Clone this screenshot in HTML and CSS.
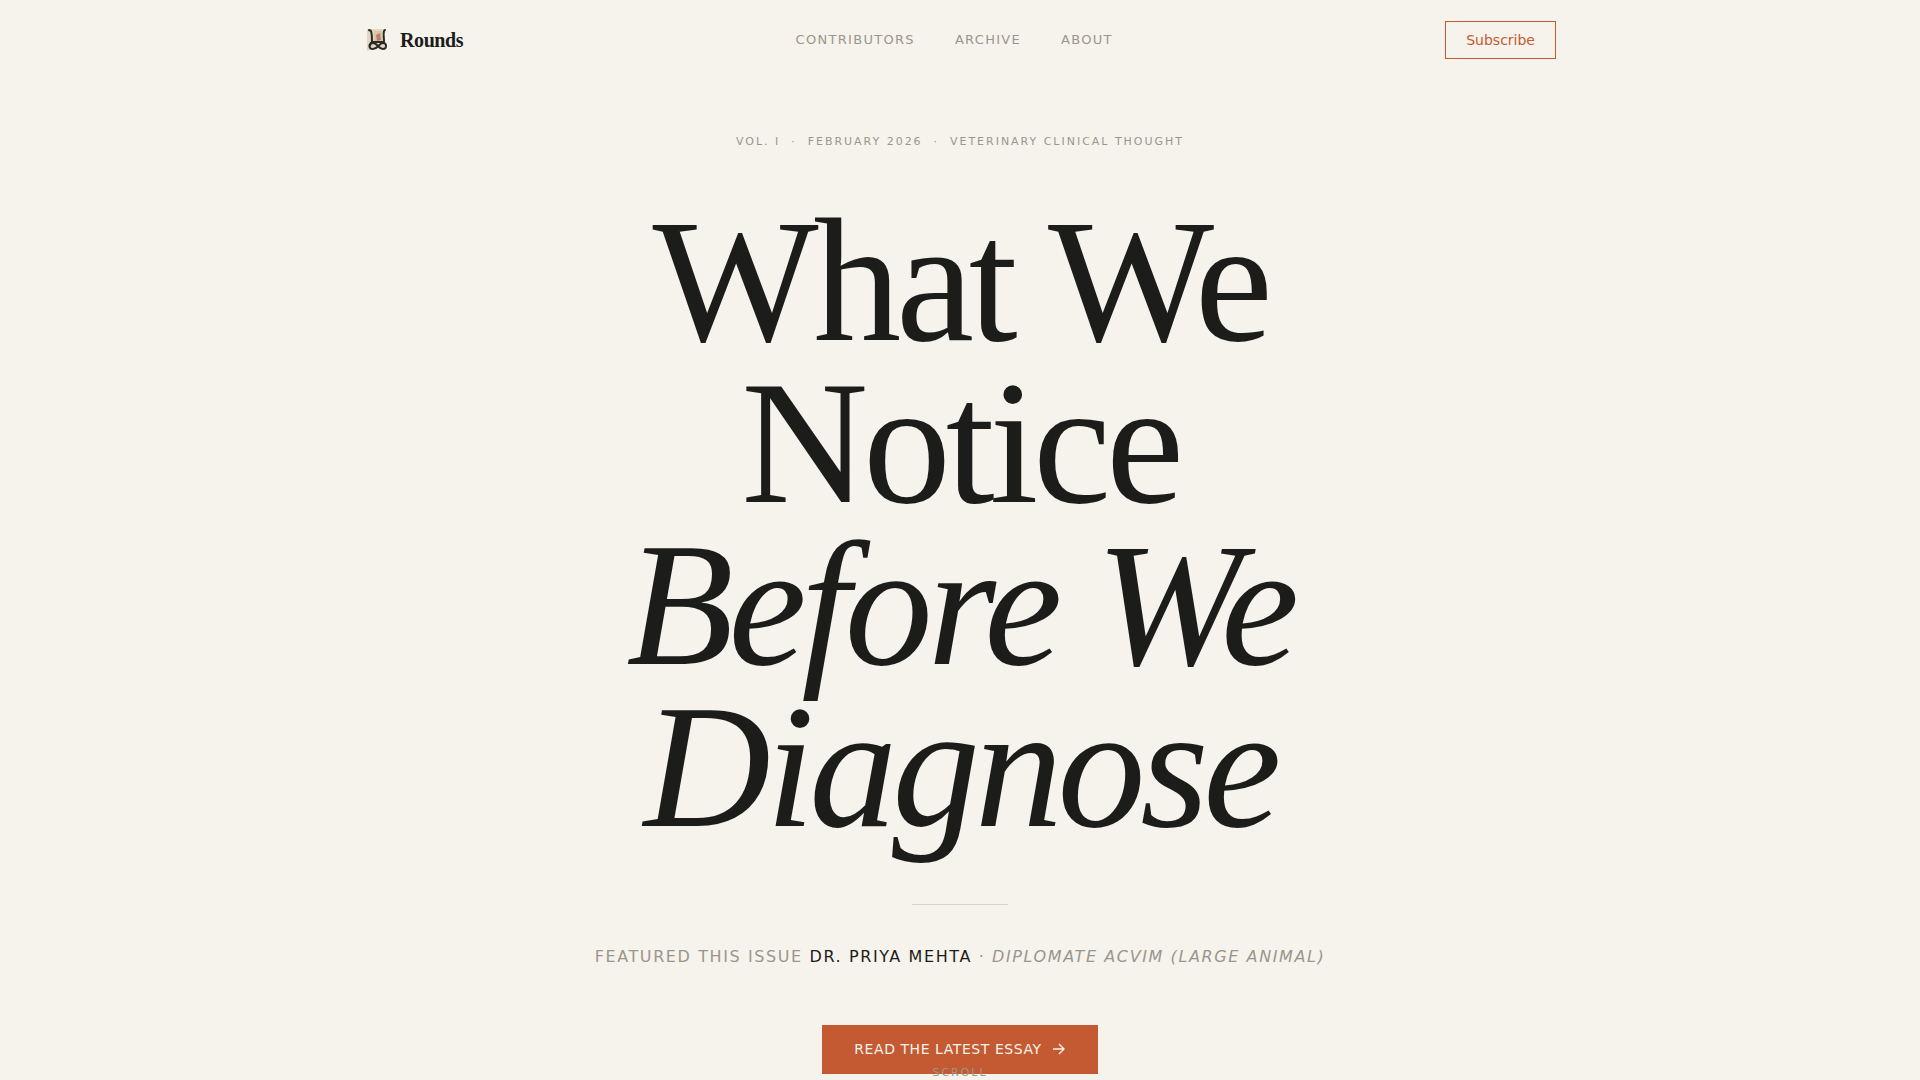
FILE: index.html
```html
<!DOCTYPE html>
<html lang="en">
<head>
    <meta charset="UTF-8">
    <meta name="viewport" content="width=device-width, initial-scale=1.0">
    <title>Rounds</title>
    <link rel="stylesheet" href="styles.css">
</head>
<body>
    <header class="site-header">
        <a href="#" class="brand">
            <svg class="brand-mark" viewBox="0 0 28 28" aria-hidden="true">
                <path fill="#e2d8c2" d="M3 3h18v5l-1 14-12 1-5 2z"/>
                <path fill="#dcc3ab" d="M10 5h8v11h-8z"/>
                <path fill="#b9806a" d="M12 9l4-2 1 7-4 1z"/>
                <g fill="none" stroke="#2b2a27" stroke-width="2" stroke-linecap="round" stroke-linejoin="round">
                    <path d="M5 4l2 1c1 3 1 6 1 11h12c0-5-1-8 0-11l1-1"/>
                    <path d="M8 16c-4 3-3 7 1 7 5 0 6-6 10-6 4 0 4 6 0 6-5 0-5-6-10-6-1 0-3 1-3 3"/>
                </g>
            </svg>
            <span>Rounds</span>
        </a>
        <nav class="site-nav">
            <a href="#contributors">Contributors</a>
            <a href="#archive">Archive</a>
            <a href="#about">About</a>
        </nav>
        <button type="button" class="subscribe">Subscribe</button>
    </header>

    <main class="hero">
        <p class="issue">Vol. I &nbsp;·&nbsp; February 2026 &nbsp;·&nbsp; Veterinary Clinical Thought</p>
        <h1>What We Notice <em>Before We Diagnose</em></h1>
        <hr class="rule">
        <p class="featured">Featured this issue <strong>Dr. Priya Mehta</strong> · <em>Diplomate ACVIM (Large Animal)</em></p>
        <a href="#essay" class="read-link">
            Read the latest essay
            <svg viewBox="0 0 14 14" aria-hidden="true">
                <path d="M1 7h11M7 2l5 5-5 5"/>
            </svg>
        </a>
    </main>
    <div class="scroll-hint">Scroll</div>
</body>
</html>
```
FILE: styles.css
```css
* {
    box-sizing: border-box;
}
body {
    margin: 0;
    min-height: 100vh;
    position: relative;
    overflow: hidden;
    background-color: #f6f3ec;
    color: #1c1c1b;
    font-family: "DejaVu Sans", sans-serif;
    font-size: 16px;
    line-height: 24px;
}
a {
    color: inherit;
    text-decoration: none;
}
.site-header {
    display: flex;
    align-items: center;
    justify-content: space-between;
    max-width: 1320px;
    height: 80px;
    margin: 0 auto;
    padding: 0 64px;
}
.brand {
    display: flex;
    align-items: center;
    gap: 8px;
    font-family: "Liberation Serif", serif;
    font-size: 20px;
    font-weight: bold;
    letter-spacing: -0.02em;
}
.brand-mark {
    width: 28px;
    height: 28px;
}
.site-nav {
    display: flex;
    gap: 40px;
    color: #9a968c;
    font-size: 13px;
    letter-spacing: 0.1em;
    text-transform: uppercase;
}
.subscribe {
    padding: 8px 20px;
    border: 1px solid #c45a32;
    background: none;
    color: #c45a32;
    font-family: inherit;
    font-size: 14px;
    line-height: 20px;
    cursor: pointer;
}
.subscribe:hover {
    background-color: #c45a32;
    color: #f6f3ec;
}
.hero {
    display: flex;
    flex-direction: column;
    align-items: center;
    padding: 48px 24px;
    text-align: center;
}
.issue {
    margin: 0 0 44px;
    color: #9a968c;
    font-size: 11px;
    line-height: 28px;
    letter-spacing: 0.18em;
    text-transform: uppercase;
}
h1 {
    max-width: 800px;
    margin: 0;
    font-family: "Liberation Serif", serif;
    font-size: 176px;
    font-weight: normal;
    line-height: 0.92;
    letter-spacing: -0.03em;
}
.rule {
    width: 96px;
    height: 1px;
    margin: 56px 0 40px;
    border: none;
    background-color: #d9d5cb;
}
.featured {
    margin: 0 0 56px;
    color: #9a968c;
    letter-spacing: 0.1em;
    text-transform: uppercase;
}
.featured strong {
    color: #1c1c1b;
    font-weight: normal;
}
.read-link {
    display: flex;
    align-items: center;
    gap: 10px;
    padding: 16px 32px;
    background-color: #c45a32;
    color: #f6f3ec;
    font-size: 14px;
    line-height: 17px;
    letter-spacing: 0.04em;
    text-transform: uppercase;
}
.read-link svg {
    width: 14px;
    height: 14px;
    fill: none;
    stroke: currentColor;
    stroke-width: 1.4;
}
/* sits over the bottom of the hero */
.scroll-hint {
    position: absolute;
    bottom: 40px;
    left: 0;
    right: 0;
    color: #9a968c;
    font-size: 11px;
    line-height: 18px;
    letter-spacing: 0.18em;
    text-align: center;
    text-transform: uppercase;
}
```
